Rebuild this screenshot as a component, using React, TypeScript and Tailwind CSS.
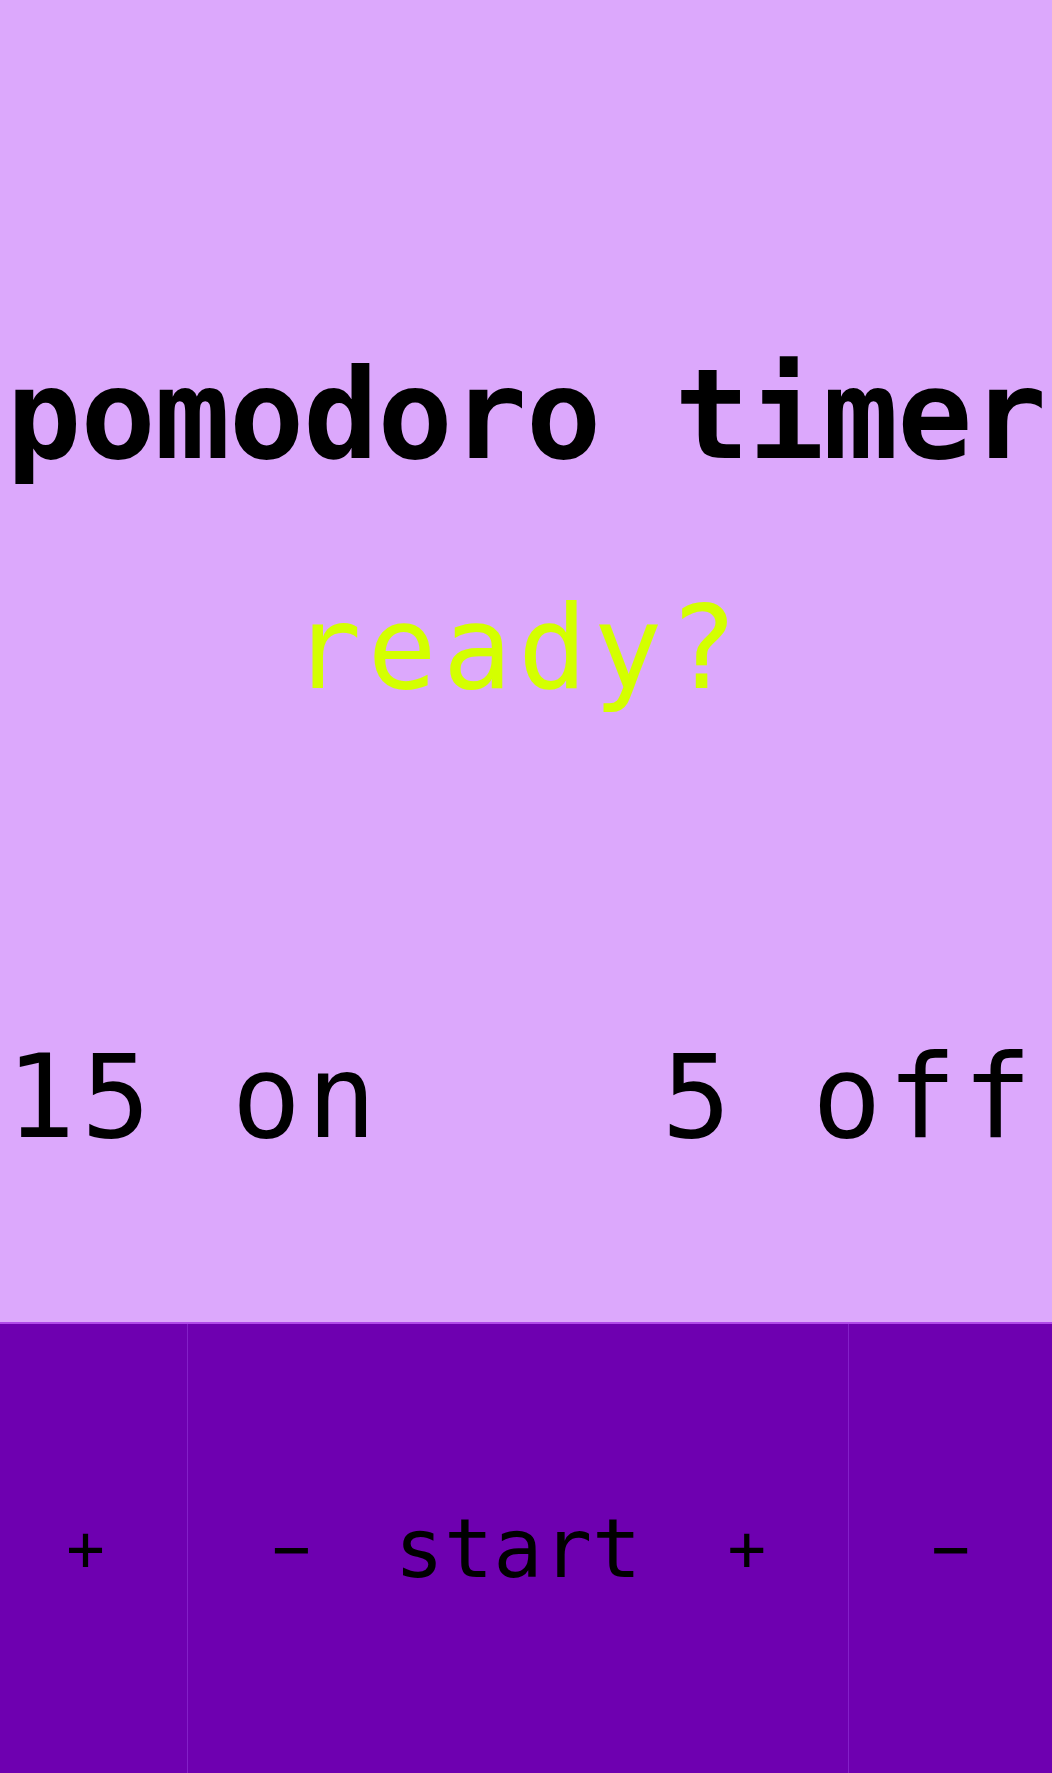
import React, { useState } from 'react';

const mono = { fontFamily: '"DejaVu Sans Mono", "Liberation Mono", monospace' };

export default function App() {
  const [on, setOn] = useState(15);
  const [off, setOff] = useState(5);

  return (
    <div className="w-full min-h-screen flex flex-col bg-[#dca8fc] text-black" style={mono}>
      {/* Top panel */}
      <div className="h-[1322px] flex flex-col">
        <h1 className="pt-[352px] text-center text-[125px] leading-none font-bold whitespace-nowrap tracking-[-1px]">
          pomodoro timer
        </h1>
        <p className="mt-[114px] text-center text-[115px] leading-none tracking-[6px] text-[#d4ff00] pr-[16px]">
          ready?
        </p>
        <div className="mt-[334px] flex justify-between text-[115px] leading-none tracking-[6px] pl-[6px] pr-[14px]">
          <span>{on} on</span>
          <span>{off} off</span>
        </div>
      </div>

      {/* Controls */}
      <div className="flex h-[451px] bg-[#6e00b0] border-t-2 border-[#b04ae8] leading-none">
        <button
          onClick={() => setOn(on + 1)}
          className="w-[188px] flex items-center justify-center pr-[16px] text-[64px] border-r border-[#8420c8]"
        >
          +
        </button>
        <div className="w-[661px] flex items-center pl-[84px] border-r border-[#8420c8]">
          <button onClick={() => setOn(Math.max(1, on - 1))} className="text-[64px]">
            −
          </button>
          <button className="ml-[84px] text-[82px]">start</button>
          <button onClick={() => setOff(off + 1)} className="ml-[86px] text-[64px]">
            +
          </button>
        </div>
        <button
          onClick={() => setOff(Math.max(1, off - 1))}
          className="flex-1 flex items-center justify-center text-[64px]"
        >
          −
        </button>
      </div>
    </div>
  );
}
